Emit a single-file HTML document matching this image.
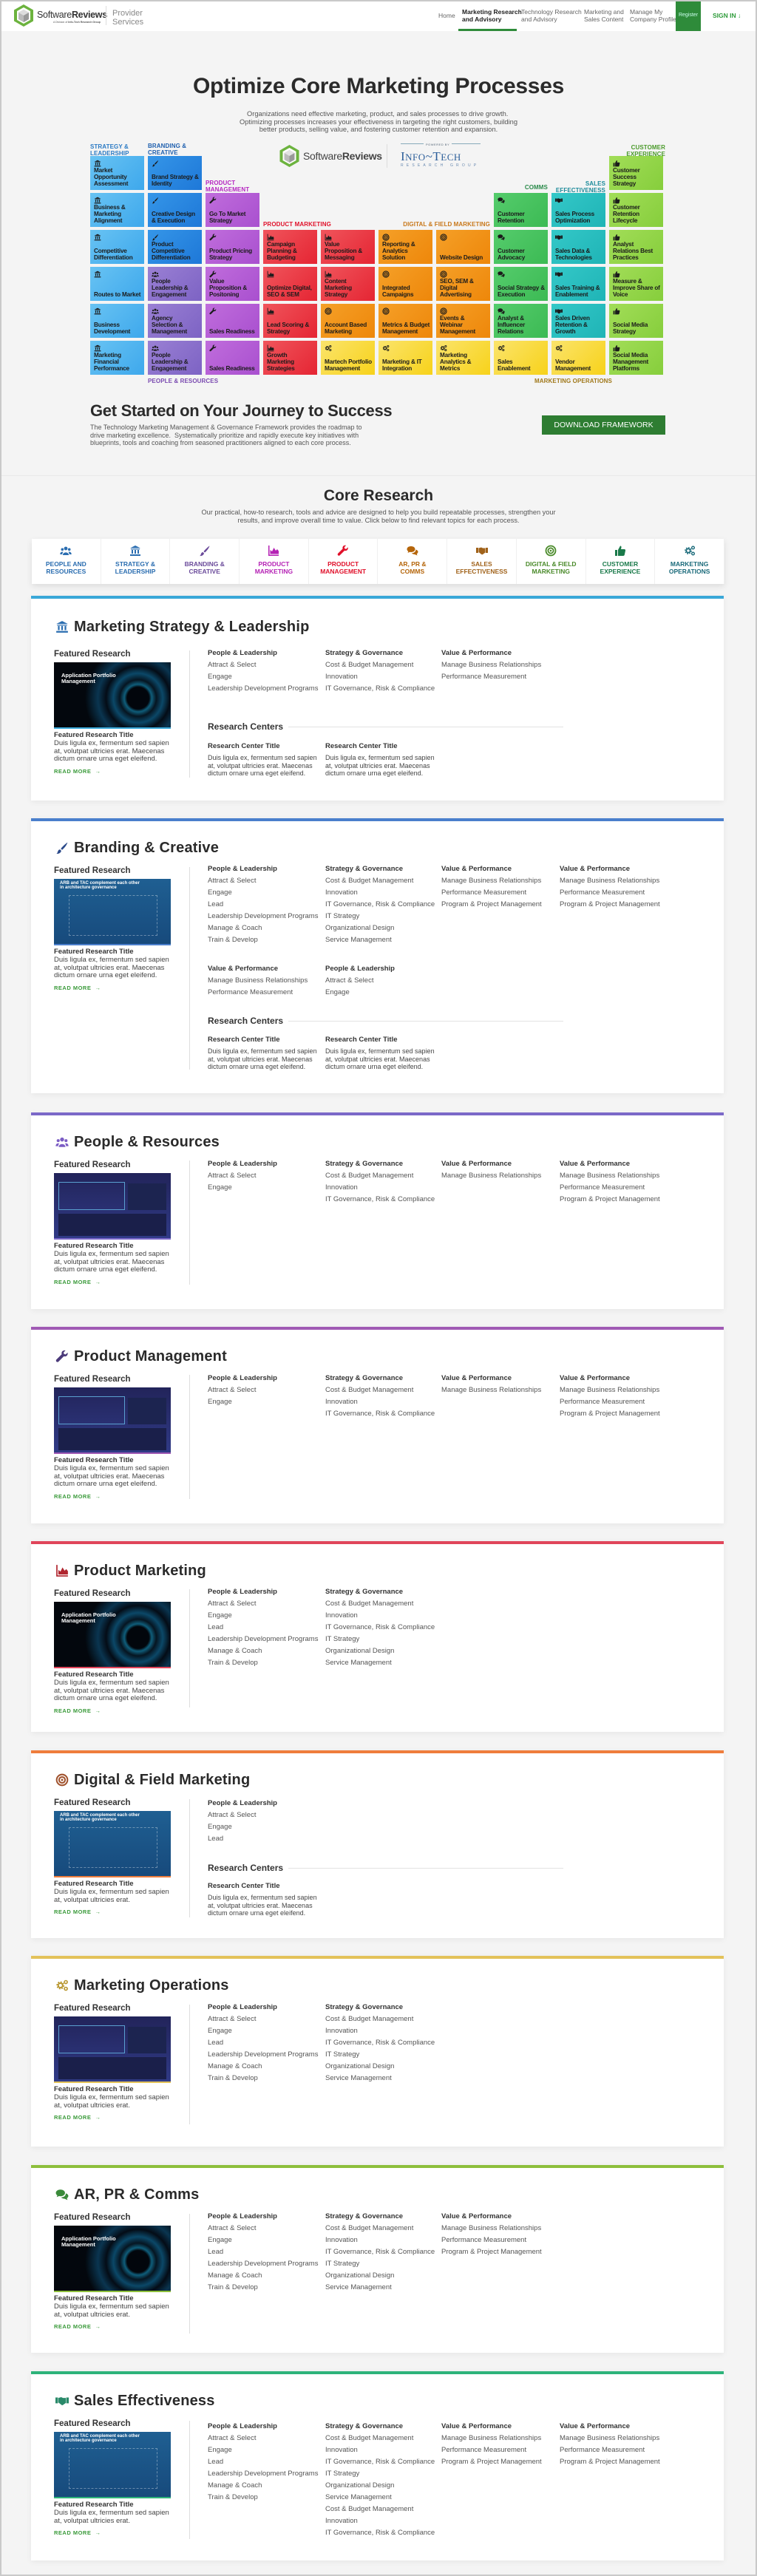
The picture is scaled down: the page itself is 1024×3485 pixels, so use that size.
<!DOCTYPE html>
<html><head><meta charset="utf-8">
<style>
*{box-sizing:border-box}
html,body{margin:0;padding:0}
body{width:1024px;height:3485px;position:relative;overflow:hidden;background:#f4f4f4;font-family:"Liberation Sans",sans-serif;color:#333}
.abs{position:absolute}
#frame{position:absolute;left:0;top:0;width:1024px;height:3485px;border:2px solid #c9c9c9;pointer-events:none;z-index:50}
header{position:absolute;left:0;top:0;width:1024px;height:42px;background:#fff}
.nav{position:absolute;font-size:8.5px;line-height:10px;color:#666;top:11px}
.t{position:absolute;width:73px;height:46px;padding:5px 3px 4px 5px;display:flex;flex-direction:column;justify-content:space-between;font-weight:bold;font-size:8.2px;line-height:9.2px;letter-spacing:-.2px;color:#1b1b1b;overflow:hidden}
.t svg{width:10px;height:10px;fill:#1b1b1b;color:#1b1b1b;flex:none}
.bl{background:linear-gradient(135deg,#68c3f3,#3ea8ec)}
.bb{background:linear-gradient(135deg,#3596e8,#1e78d8)}
.pp{background:linear-gradient(135deg,#9a80d4,#7d63c4)}
.pm{background:linear-gradient(135deg,#c06ddc,#a950cf)}
.rd{background:linear-gradient(135deg,#f0555c,#e52533)}
.or{background:linear-gradient(135deg,#f5a028,#ee870a)}
.ye{background:linear-gradient(135deg,#fbe46c,#f7d21a)}
.gr{background:linear-gradient(135deg,#55cc6c,#3cba54)}
.te{background:linear-gradient(135deg,#34c8c8,#1fb4b6)}
.li{background:linear-gradient(135deg,#a2dd58,#86ce3c)}
.lab{position:absolute;font-weight:bold;font-size:8px;line-height:8.5px;letter-spacing:.1px}
.cr{position:absolute;top:729px;height:61px;width:93.7px;background:#fff;text-align:center;font-size:8.5px;line-height:9.5px;font-weight:bold;padding-top:8px;border-right:1px solid #f0f0f0}
.cr svg{width:16px;height:16px;display:block;margin:0 auto 6px}
.sec{position:absolute;left:42px;width:937px;background:#fff;box-shadow:0 2px 8px rgba(0,0,0,.06)}
.bar{position:absolute;left:0;top:0;width:100%;height:4px}
.sh{position:absolute;left:58px;font-weight:bold;font-size:20px;line-height:22px;color:#2a2a2a;letter-spacing:.2px}
.si{position:absolute;left:31px;width:22px;height:18px}
.fr{position:absolute;left:31px;width:170px}
.fr .fl{font-weight:bold;font-size:11.5px;line-height:14px;color:#333}
.img{width:158px;height:90px;margin-top:4px;position:relative;overflow:hidden;border-bottom:2px solid}
.fr .ft{font-weight:bold;font-size:9.5px;line-height:12px;margin-top:3px;color:#333}
.fr .fd{font-size:9.5px;line-height:10.5px;color:#444;width:160px}
.fr .rm{font-size:7.5px;font-weight:bold;color:#3a9a3a;margin-top:6px;letter-spacing:.5px}
.dv{position:absolute;left:214px;width:1px;background:#ddd}
.col{position:absolute;width:155px}
.col b{display:block;height:16px;line-height:16px;font-size:9.5px;color:#333}
.col div{height:16px;line-height:16px;font-size:9.5px;color:#555;white-space:nowrap}
.rch{position:absolute;left:239px;font-weight:bold;font-size:12px;line-height:14px;color:#333}
.rcl{position:absolute;left:348px;width:372px;height:1px;background:#e2e2e2}
.rc{position:absolute;width:158px}
.rc b{display:block;font-size:9.5px;line-height:12px;color:#333;margin-bottom:4px}
.rc div{font-size:9px;line-height:10.5px;color:#444}
</style></head><body>
<svg width="0" height="0" style="position:absolute">
<defs>
<symbol id="bank" viewBox="0 0 16 16"><path d="M8 1 L15 4.5 H1 Z M2 5.5h12v1H2z M3 7h2v5H3z M7 7h2v5H7z M11 7h2v5h-2z M1 13h14v2H1z"/></symbol>
<symbol id="brush" viewBox="0 0 16 16"><path d="M14.5 1.5 C12 3 8 7 6.5 9 L8 10.5 C10 9 13.5 5 14.5 1.5Z M5.5 10 C3.5 10 3 12 2.5 13.5 C2 14.5 1.5 15 1 15 C4 15.5 6.5 14 7 11.5Z"/></symbol>
<symbol id="ppl" viewBox="0 0 16 16"><circle cx="8" cy="5" r="2.4"/><circle cx="3.3" cy="6.3" r="1.8"/><circle cx="12.7" cy="6.3" r="1.8"/><path d="M4 14 C4 9.2 12 9.2 12 14Z M0.3 13 C0.3 9.8 3 9 4.6 9.8 C3.6 10.8 3.3 12 3.3 13Z M15.7 13 C15.7 9.8 13 9 11.4 9.8 C12.4 10.8 12.7 12 12.7 13Z"/></symbol>
<symbol id="wrench" viewBox="0 0 16 16"><path d="M14.6 3.4 L12.3 5.7 L10.3 5.2 L9.8 3.2 L12.1 0.9 C10.2 0.3 8 1.3 7.5 3.3 C7.3 4.1 7.4 4.8 7.6 5.4 L1.2 11.8 C0.5 12.5 0.5 13.6 1.2 14.3 C1.9 15 3 15 3.7 14.3 L10.1 7.9 C10.7 8.1 11.5 8.2 12.2 8 C14.2 7.5 15.2 5.3 14.6 3.4Z"/></symbol>
<symbol id="chart" viewBox="0 0 16 16"><path d="M1 1h1.5v12.5H15V15H1z M3.5 12.5 V7 L6 9 L8.5 4 L11 8 L13 6 L15 8.5 V12.5Z"/></symbol>
<symbol id="target" viewBox="0 0 16 16"><circle cx="8" cy="8" r="6.5" fill="none" stroke="currentColor" stroke-width="1.8"/><circle cx="8" cy="8" r="3.6" fill="none" stroke="currentColor" stroke-width="1.8"/><circle cx="8" cy="8" r="1.3"/></symbol>
<symbol id="chat" viewBox="0 0 16 16"><path d="M6 2 C2.7 2 0.5 3.8 0.5 6 C0.5 7.2 1.2 8.3 2.3 9 L1.5 11 L4.3 9.8 C4.8 9.9 5.4 10 6 10 C9.3 10 11.5 8.2 11.5 6 C11.5 3.8 9.3 2 6 2Z M12.5 6.5 C12.5 9.5 9.7 11.3 6.8 11.3 C7.8 12.4 9.4 13 11 13 L14.5 14.5 L13.8 12.3 C14.9 11.6 15.5 10.6 15.5 9.5 C15.5 8.2 14.3 7 12.5 6.5Z"/></symbol>
<symbol id="hand" viewBox="0 0 16 16"><path d="M0 4h3v7H0z M13 4h3v7h-3z M3.5 4.5 L7 3.5 L9 4.5 L12.5 4.5 V10.5 L9 13 C8.3 13.5 7.5 13.3 7 12.7 L3.5 10Z"/></symbol>
<symbol id="thumb" viewBox="0 0 16 16"><path d="M1 7h3v8H1z M5 7 L8 1.5 C9.2 1.5 9.8 2.4 9.5 3.8 L9 6 H13.5 C14.6 6 15.3 7 15 8 L13.8 13.6 C13.6 14.4 12.9 15 12 15 H5Z"/></symbol>
<symbol id="gear" viewBox="0 0 16 16"><circle cx="6" cy="8" r="3.6" fill="none" stroke="currentColor" stroke-width="2.4" stroke-dasharray="1.6 1.2"/><circle cx="6" cy="8" r="2.6" fill="none" stroke="currentColor" stroke-width="1.6"/><circle cx="12.5" cy="4" r="1.8" fill="none" stroke="currentColor" stroke-width="1.4"/><circle cx="12.5" cy="12" r="1.8" fill="none" stroke="currentColor" stroke-width="1.4"/></symbol>
</defs></svg>

<header>
 <svg class="abs" style="left:17px;top:5px" width="30" height="32" viewBox="0 0 30 32"><polygon points="15,1 28,8.5 28,23.5 15,31 2,23.5 2,8.5" fill="#6cb33e"/><polygon points="15,5 24,10 24,22 15,27 6,22 6,10" fill="#fff"/><polygon points="15,8 22,12 22,21 15,25 8,21 8,12" fill="#bbb"/><polygon points="15,8 22,12 15,16 8,12" fill="#ddd"/><polygon points="15,16 22,12 22,21 15,25" fill="#999"/></svg>
 <div class="abs" style="left:50px;top:13px;font-size:12.5px;color:#333;letter-spacing:-.3px">Software<b>Reviews</b></div>
 <div class="abs" style="left:72px;top:28px;font-size:3.5px;color:#555">A Division of <b>Info-Tech Research Group</b></div>
 <div class="abs" style="left:143px;top:8px;width:1px;height:26px;background:#ddd"></div>
 <div class="abs" style="left:152px;top:12px;font-size:11px;line-height:12px;color:#888">Provider<br>Services</div>
 <div class="nav" style="left:593px;top:16px">Home</div>
 <div class="nav" style="left:625px;color:#222;font-weight:bold">Marketing Research<br>and Advisory</div>
 <div class="abs" style="left:620px;top:39px;width:79px;height:3px;background:#2e8b3a"></div>
 <div class="nav" style="left:705px">Technology Research<br>and Advisory</div>
 <div class="nav" style="left:790px">Marketing and<br>Sales Content</div>
 <div class="nav" style="left:852px">Manage My<br>Company Profile</div>
 <div class="abs" style="left:914px;top:0;width:34px;height:42px;background:#2e8b3a;color:#cfe;font-size:7px;text-align:center;line-height:42px">Register</div>
 <div class="abs" style="left:964px;top:16px;font-size:8.5px;font-weight:bold;color:#2e9b3a">SIGN IN ↓</div>
</header>

<div class="abs" style="left:0;top:100px;width:1024px;text-align:center;font-weight:bold;font-size:30px;color:#2b2b2b;letter-spacing:-.3px">Optimize Core Marketing Processes</div>
<div class="abs" style="left:312px;top:149px;width:400px;text-align:center;font-size:9.3px;line-height:10.7px;color:#555">Organizations need effective marketing, product, and sales processes to drive growth.&nbsp; Optimizing processes increases your effectiveness in targeting the right customers, building better products, selling value, and fostering customer retention and expansion.</div>

<!-- logos -->
<svg class="abs" style="left:376px;top:195px" width="31" height="32" viewBox="0 0 30 32"><polygon points="15,1 28,8.5 28,23.5 15,31 2,23.5 2,8.5" fill="#6cb33e"/><polygon points="15,5 24,10 24,22 15,27 6,22 6,10" fill="#fff"/><polygon points="15,8 22,12 22,21 15,25 8,21 8,12" fill="#bbb"/><polygon points="15,8 22,12 15,16 8,12" fill="#e2e2e2"/><polygon points="15,16 22,12 22,21 15,25" fill="#999"/></svg>
<div class="abs" style="left:410px;top:203px;font-size:14px;color:#444;letter-spacing:-.3px">Software<b>Reviews</b></div>
<div class="abs" style="left:523px;top:195px;width:1px;height:32px;background:#ddd"></div>
<div class="abs" style="left:542px;top:194px;width:108px;height:4px;border-top:1px solid #8ab"></div>
<div class="abs" style="left:573px;top:193px;background:#f4f4f4;padding:0 3px;font-size:4px;color:#567;letter-spacing:.5px">POWERED BY</div>
<div class="abs" style="left:542px;top:202px;font-family:'Liberation Serif',serif;font-size:17px;color:#2d5f9a;letter-spacing:.5px">I<span style="font-size:13px">NFO</span>~T<span style="font-size:13px">ECH</span></div>
<div class="abs" style="left:542px;top:221px;font-size:5px;color:#6a8ab0;letter-spacing:4.2px">RESEARCH GROUP</div>

<!-- grid labels -->
<div class="lab" style="left:122px;top:195px;color:#2a7ac4">STRATEGY &amp;<br>LEADERSHIP</div>
<div class="lab" style="left:200px;top:194px;color:#1e5fae">BRANDING &amp;<br>CREATIVE</div>
<div class="lab" style="left:278px;top:244px;color:#b525c0">PRODUCT<br>MANAGEMENT</div>
<div class="lab" style="left:356px;top:300px;color:#e0102a">PRODUCT MARKETING</div>
<div class="lab" style="left:530px;top:300px;width:133px;text-align:right;color:#c8781a">DIGITAL &amp; FIELD MARKETING</div>
<div class="lab" style="left:660px;top:250px;width:81px;text-align:right;color:#2a8a4a">COMMS</div>
<div class="lab" style="left:730px;top:245px;width:89px;text-align:right;color:#1a8a9a">SALES<br>EFFECTIVENESS</div>
<div class="lab" style="left:800px;top:196px;width:100px;text-align:right;color:#4a9a2a">CUSTOMER<br>EXPERIENCE</div>
<div class="lab" style="left:200px;top:512px;color:#7a4ab0">PEOPLE &amp; RESOURCES</div>
<div class="lab" style="left:723px;top:512px;color:#a0781a">MARKETING OPERATIONS</div>

<!-- tiles -->
<div class="t bl" style="left:122px;top:211px"><svg><use href="#bank"/></svg><span>Market Opportunity Assessment</span></div>
<div class="t bl" style="left:122px;top:261px"><svg><use href="#bank"/></svg><span>Business &amp; Marketing Alignment</span></div>
<div class="t bl" style="left:122px;top:311px"><svg><use href="#bank"/></svg><span>Competitive Differentiation</span></div>
<div class="t bl" style="left:122px;top:361px"><svg><use href="#bank"/></svg><span>Routes to Market</span></div>
<div class="t bl" style="left:122px;top:411px"><svg><use href="#bank"/></svg><span>Business Development</span></div>
<div class="t bl" style="left:122px;top:461px"><svg><use href="#bank"/></svg><span>Marketing Financial Performance</span></div>

<div class="t bb" style="left:200px;top:211px"><svg><use href="#brush"/></svg><span>Brand Strategy &amp; Identity</span></div>
<div class="t bb" style="left:200px;top:261px"><svg><use href="#brush"/></svg><span>Creative Design &amp; Execution</span></div>
<div class="t bb" style="left:200px;top:311px"><svg><use href="#brush"/></svg><span>Product Competitive Differentiation</span></div>
<div class="t pp" style="left:200px;top:361px"><svg><use href="#ppl"/></svg><span>People Leadership &amp; Engagement</span></div>
<div class="t pp" style="left:200px;top:411px"><svg><use href="#ppl"/></svg><span>Agency Selection &amp; Management</span></div>
<div class="t pp" style="left:200px;top:461px"><svg><use href="#ppl"/></svg><span>People Leadership &amp; Engagement</span></div>

<div class="t pm" style="left:278px;top:261px"><svg><use href="#wrench"/></svg><span>Go To Market Strategy</span></div>
<div class="t pm" style="left:278px;top:311px"><svg><use href="#wrench"/></svg><span>Product Pricing Strategy</span></div>
<div class="t pm" style="left:278px;top:361px"><svg><use href="#wrench"/></svg><span>Value Proposition &amp; Positoning</span></div>
<div class="t pm" style="left:278px;top:411px"><svg><use href="#wrench"/></svg><span>Sales Readiness</span></div>
<div class="t pm" style="left:278px;top:461px"><svg><use href="#wrench"/></svg><span>Sales Readiness</span></div>

<div class="t rd" style="left:356px;top:311px"><svg><use href="#chart"/></svg><span>Campaign Planning &amp; Budgeting</span></div>
<div class="t rd" style="left:356px;top:361px"><svg><use href="#chart"/></svg><span>Optimize Digital, SEO &amp; SEM</span></div>
<div class="t rd" style="left:356px;top:411px"><svg><use href="#chart"/></svg><span>Lead Scoring &amp; Strategy</span></div>
<div class="t rd" style="left:356px;top:461px"><svg><use href="#chart"/></svg><span>Growth Marketing Strategies</span></div>

<div class="t rd" style="left:434px;top:311px"><svg><use href="#chart"/></svg><span>Value Proposition &amp; Messaging</span></div>
<div class="t rd" style="left:434px;top:361px"><svg><use href="#chart"/></svg><span>Content Marketing Strategy</span></div>
<div class="t or" style="left:434px;top:411px"><svg><use href="#target"/></svg><span>Account Based Marketing</span></div>
<div class="t ye" style="left:434px;top:461px"><svg><use href="#gear"/></svg><span>Martech Portfolio Management</span></div>

<div class="t or" style="left:512px;top:311px"><svg><use href="#target"/></svg><span>Reporting &amp; Analytics Solution</span></div>
<div class="t or" style="left:512px;top:361px"><svg><use href="#target"/></svg><span>Integrated Campaigns</span></div>
<div class="t or" style="left:512px;top:411px"><svg><use href="#target"/></svg><span>Metrics &amp; Budget Management</span></div>
<div class="t ye" style="left:512px;top:461px"><svg><use href="#gear"/></svg><span>Marketing &amp; IT Integration</span></div>

<div class="t or" style="left:590px;top:311px"><svg><use href="#target"/></svg><span>Website Design</span></div>
<div class="t or" style="left:590px;top:361px"><svg><use href="#target"/></svg><span>SEO, SEM &amp; Digital Advertising</span></div>
<div class="t or" style="left:590px;top:411px"><svg><use href="#target"/></svg><span>Events &amp; Webinar Management</span></div>
<div class="t ye" style="left:590px;top:461px"><svg><use href="#gear"/></svg><span>Marketing Analytics &amp; Metrics</span></div>

<div class="t gr" style="left:668px;top:261px"><svg><use href="#chat"/></svg><span>Customer Retention</span></div>
<div class="t gr" style="left:668px;top:311px"><svg><use href="#chat"/></svg><span>Customer Advocacy</span></div>
<div class="t gr" style="left:668px;top:361px"><svg><use href="#chat"/></svg><span>Social Strategy &amp; Execution</span></div>
<div class="t gr" style="left:668px;top:411px"><svg><use href="#chat"/></svg><span>Analyst &amp; Influencer Relations</span></div>
<div class="t ye" style="left:668px;top:461px"><svg><use href="#gear"/></svg><span>Sales Enablement</span></div>

<div class="t te" style="left:746px;top:261px"><svg><use href="#hand"/></svg><span>Sales Process Optimization</span></div>
<div class="t te" style="left:746px;top:311px"><svg><use href="#hand"/></svg><span>Sales Data &amp; Technologies</span></div>
<div class="t te" style="left:746px;top:361px"><svg><use href="#hand"/></svg><span>Sales Training &amp; Enablement</span></div>
<div class="t te" style="left:746px;top:411px"><svg><use href="#hand"/></svg><span>Sales Driven Retention &amp; Growth</span></div>
<div class="t ye" style="left:746px;top:461px"><svg><use href="#gear"/></svg><span>Vendor Management</span></div>

<div class="t li" style="left:824px;top:211px"><svg><use href="#thumb"/></svg><span>Customer Success Strategy</span></div>
<div class="t li" style="left:824px;top:261px"><svg><use href="#thumb"/></svg><span>Customer Retention Lifecycle</span></div>
<div class="t li" style="left:824px;top:311px"><svg><use href="#thumb"/></svg><span>Analyst Relations Best Practices</span></div>
<div class="t li" style="left:824px;top:361px"><svg><use href="#thumb"/></svg><span>Measure &amp; Improve Share of Voice</span></div>
<div class="t li" style="left:824px;top:411px"><svg><use href="#thumb"/></svg><span>Social Media Strategy</span></div>
<div class="t li" style="left:824px;top:461px"><svg><use href="#thumb"/></svg><span>Social Media Management Platforms</span></div>

<!-- get started -->
<div class="abs" style="left:122px;top:543px;font-weight:bold;font-size:22px;color:#2b2b2b;letter-spacing:-.3px">Get Started on Your Journey to Success</div>
<div class="abs" style="left:122px;top:573px;width:375px;font-size:9px;line-height:10.7px;color:#555">The Technology Marketing Management &amp; Governance Framework provides the roadmap to drive marketing excellence.&nbsp; Systematically prioritize and rapidly execute key initiatives with blueprints, tools and coaching from seasoned practitioners aligned to each core process.</div>
<div class="abs" style="left:733px;top:562px;width:167px;height:26px;background:#2e7d32;color:#fff;font-size:10.5px;line-height:26px;text-align:center">DOWNLOAD FRAMEWORK</div>
<div class="abs" style="left:0;top:643px;width:1024px;height:1px;background:#e8e8e8"></div>

<!-- core research -->
<div class="abs" style="left:0;top:659px;width:1024px;text-align:center;font-weight:bold;font-size:21px;color:#2b2b2b">Core Research</div>
<div class="abs" style="left:272px;top:688px;width:480px;text-align:center;font-size:9.2px;line-height:11px;color:#555">Our practical, how-to research, tools and advice are designed to help you build repeatable processes, strengthen your results, and improve overall time to value. Click below to find relevant topics for each process.</div>
<div class="abs" style="left:43px;top:729px;width:937px;height:61px;box-shadow:0 3px 8px rgba(0,0,0,.1);background:#fff"></div>
<div class="cr" style="left:43px;color:#2a6db0"><svg style="fill:#2a6db0"><use href="#ppl"/></svg>PEOPLE AND<br>RESOURCES</div>
<div class="cr" style="left:136.7px;color:#2a6db0"><svg style="fill:#2a6db0"><use href="#bank"/></svg>STRATEGY &amp;<br>LEADERSHIP</div>
<div class="cr" style="left:230.4px;color:#6a4a9a"><svg style="fill:#6a4a9a"><use href="#brush"/></svg>BRANDING &amp;<br>CREATIVE</div>
<div class="cr" style="left:324.1px;color:#b523b5"><svg style="fill:#b523b5"><use href="#chart"/></svg>PRODUCT<br>MARKETING</div>
<div class="cr" style="left:417.8px;color:#e0102a"><svg style="fill:#e0102a"><use href="#wrench"/></svg>PRODUCT<br>MANAGEMENT</div>
<div class="cr" style="left:511.5px;color:#b5650a"><svg style="fill:#b5650a"><use href="#chat"/></svg>AR, PR &amp;<br>COMMS</div>
<div class="cr" style="left:605.2px;color:#a0621a"><svg style="fill:#a0621a"><use href="#hand"/></svg>SALES<br>EFFECTIVENESS</div>
<div class="cr" style="left:698.9px;color:#4a8a2a"><svg style="fill:#4a8a2a;color:#4a8a2a"><use href="#target"/></svg>DIGITAL &amp; FIELD<br>MARKETING</div>
<div class="cr" style="left:792.6px;color:#1a7a4a"><svg style="fill:#1a7a4a"><use href="#thumb"/></svg>CUSTOMER<br>EXPERIENCE</div>
<div class="cr" style="left:886.3px;color:#1a6a7a"><svg style="fill:#1a6a7a;color:#1a6a7a"><use href="#gear"/></svg>MARKETING<br>OPERATIONS</div>

<!-- SECTION 1 -->
<div class="sec" style="top:806px;height:277px">
 <div class="bar" style="background:#3aa8d8"></div>
 <svg class="si" style="top:33px;fill:#2a6db0"><use href="#bank"/></svg>
 <div class="sh" style="top:31px">Marketing Strategy &amp; Leadership</div>
 <div class="fr" style="top:72px"><div class="fl">Featured Research</div>
  <div class="img" style="border-color:#3aa8d8;background:radial-gradient(circle at 72% 55%,#02060c 0 12%,#0f5d7a 15%,#061521 20%,#0b4868 27%,#040c16 35%,#0a3550 44%,#03070d 58%)"><div style="position:absolute;left:10px;top:14px;color:#fff;font-weight:bold;font-size:7.5px;line-height:7.5px">Application Portfolio<br>Management</div></div>
  <div class="ft">Featured Research Title</div><div class="fd">Duis ligula ex, fermentum sed sapien at, volutpat ultricies erat. Maecenas dictum ornare urna eget eleifend.</div><div class="rm">READ MORE &nbsp;→</div></div>
 <div class="dv" style="top:74px;height:172px"></div>
 <div class="col" style="left:239px;top:70px"><b>People &amp; Leadership</b><div>Attract &amp; Select</div><div>Engage</div><div>Leadership Development Programs</div></div>
 <div class="col" style="left:398px;top:70px"><b>Strategy &amp; Governance</b><div>Cost &amp; Budget Management</div><div>Innovation</div><div>IT Governance, Risk &amp; Compliance</div></div>
 <div class="col" style="left:555px;top:70px"><b>Value &amp; Performance</b><div>Manage Business Relationships</div><div>Performance Measurement</div></div>
 <div class="rch" style="top:170px">Research Centers</div><div class="rcl" style="top:177px"></div>
 <div class="rc" style="left:239px;top:198px"><b>Research Center Title</b><div>Duis ligula ex, fermentum sed sapien at, volutpat ultricies erat. Maecenas dictum ornare urna eget eleifend.</div></div>
 <div class="rc" style="left:398px;top:198px"><b>Research Center Title</b><div>Duis ligula ex, fermentum sed sapien at, volutpat ultricies erat. Maecenas dictum ornare urna eget eleifend.</div></div>
</div>

<!-- SECTION 2 -->
<div class="sec" style="top:1107px;height:372px">
 <div class="bar" style="background:#4a7fcc"></div>
 <svg class="si" style="top:31px;fill:#2b4a8a"><use href="#brush"/></svg>
 <div class="sh" style="top:29px">Branding &amp; Creative</div>
 <div class="fr" style="top:64px"><div class="fl">Featured Research</div>
  <div class="img" style="border-color:#4a7fcc;background:linear-gradient(180deg,#1f5f92,#174a7c)"><div style="position:absolute;left:8px;top:3px;color:#fff;font-weight:bold;font-size:6px;line-height:6px">ARB and TAC complement each other<br>in architecture governance</div><div style="position:absolute;left:20px;top:22px;width:120px;height:55px;border:1px dashed rgba(255,255,255,.35)"></div></div>
  <div class="ft">Featured Research Title</div><div class="fd">Duis ligula ex, fermentum sed sapien at, volutpat ultricies erat. Maecenas dictum ornare urna eget eleifend.</div><div class="rm">READ MORE &nbsp;→</div></div>
 <div class="dv" style="top:66px;height:274px"></div>
 <div class="col" style="left:239px;top:61px"><b>People &amp; Leadership</b><div>Attract &amp; Select</div><div>Engage</div><div>Lead</div><div>Leadership Development Programs</div><div>Manage &amp; Coach</div><div>Train &amp; Develop</div></div>
 <div class="col" style="left:398px;top:61px"><b>Strategy &amp; Governance</b><div>Cost &amp; Budget Management</div><div>Innovation</div><div>IT Governance, Risk &amp; Compliance</div><div>IT Strategy</div><div>Organizational Design</div><div>Service Management</div></div>
 <div class="col" style="left:555px;top:61px"><b>Value &amp; Performance</b><div>Manage Business Relationships</div><div>Performance Measurement</div><div>Program &amp; Project Management</div></div>
 <div class="col" style="left:715px;top:61px"><b>Value &amp; Performance</b><div>Manage Business Relationships</div><div>Performance Measurement</div><div>Program &amp; Project Management</div></div>
 <div class="col" style="left:239px;top:196px"><b>Value &amp; Performance</b><div>Manage Business Relationships</div><div>Performance Measurement</div></div>
 <div class="col" style="left:398px;top:196px"><b>People &amp; Leadership</b><div>Attract &amp; Select</div><div>Engage</div></div>
 <div class="rch" style="top:267px">Research Centers</div><div class="rcl" style="top:274px"></div>
 <div class="rc" style="left:239px;top:294px"><b>Research Center Title</b><div>Duis ligula ex, fermentum sed sapien at, volutpat ultricies erat. Maecenas dictum ornare urna eget eleifend.</div></div>
 <div class="rc" style="left:398px;top:294px"><b>Research Center Title</b><div>Duis ligula ex, fermentum sed sapien at, volutpat ultricies erat. Maecenas dictum ornare urna eget eleifend.</div></div>
</div>

<!-- SECTION 3 -->
<div class="sec" style="top:1505px;height:266px">
 <div class="bar" style="background:#7b68c8"></div>
 <svg class="si" style="top:31px;fill:#7b5cc4"><use href="#ppl"/></svg>
 <div class="sh" style="top:29px">People &amp; Resources</div>
 <div class="fr" style="top:64px"><div class="fl">Featured Research</div>
  <div class="img" style="border-color:#7b68c8;background:linear-gradient(180deg,#22245a,#303a86)"><div style="position:absolute;left:6px;top:12px;width:90px;height:38px;border:1px solid #5aa0d0"></div><div style="position:absolute;left:100px;top:14px;width:52px;height:36px;background:#1c2450"></div><div style="position:absolute;left:6px;top:55px;width:146px;height:30px;background:#1a1f4a"></div></div>
  <div class="ft">Featured Research Title</div><div class="fd">Duis ligula ex, fermentum sed sapien at, volutpat ultricies erat. Maecenas dictum ornare urna eget eleifend.</div><div class="rm">READ MORE &nbsp;→</div></div>
 <div class="dv" style="top:65px;height:168px"></div>
 <div class="col" style="left:239px;top:62px"><b>People &amp; Leadership</b><div>Attract &amp; Select</div><div>Engage</div></div>
 <div class="col" style="left:398px;top:62px"><b>Strategy &amp; Governance</b><div>Cost &amp; Budget Management</div><div>Innovation</div><div>IT Governance, Risk &amp; Compliance</div></div>
 <div class="col" style="left:555px;top:62px"><b>Value &amp; Performance</b><div>Manage Business Relationships</div></div>
 <div class="col" style="left:715px;top:62px"><b>Value &amp; Performance</b><div>Manage Business Relationships</div><div>Performance Measurement</div><div>Program &amp; Project Management</div></div>
</div>

<!-- SECTION 4 -->
<div class="sec" style="top:1795px;height:266px">
 <div class="bar" style="background:#a05ab4"></div>
 <svg class="si" style="top:31px;fill:#4b3a7a"><use href="#wrench"/></svg>
 <div class="sh" style="top:29px">Product Management</div>
 <div class="fr" style="top:64px"><div class="fl">Featured Research</div>
  <div class="img" style="border-color:#a05ab4;background:linear-gradient(180deg,#22245a,#303a86)"><div style="position:absolute;left:6px;top:12px;width:90px;height:38px;border:1px solid #5aa0d0"></div><div style="position:absolute;left:100px;top:14px;width:52px;height:36px;background:#1c2450"></div><div style="position:absolute;left:6px;top:55px;width:146px;height:30px;background:#1a1f4a"></div></div>
  <div class="ft">Featured Research Title</div><div class="fd">Duis ligula ex, fermentum sed sapien at, volutpat ultricies erat. Maecenas dictum ornare urna eget eleifend.</div><div class="rm">READ MORE &nbsp;→</div></div>
 <div class="dv" style="top:65px;height:168px"></div>
 <div class="col" style="left:239px;top:62px"><b>People &amp; Leadership</b><div>Attract &amp; Select</div><div>Engage</div></div>
 <div class="col" style="left:398px;top:62px"><b>Strategy &amp; Governance</b><div>Cost &amp; Budget Management</div><div>Innovation</div><div>IT Governance, Risk &amp; Compliance</div></div>
 <div class="col" style="left:555px;top:62px"><b>Value &amp; Performance</b><div>Manage Business Relationships</div></div>
 <div class="col" style="left:715px;top:62px"><b>Value &amp; Performance</b><div>Manage Business Relationships</div><div>Performance Measurement</div><div>Program &amp; Project Management</div></div>
</div>

<!-- SECTION 5 -->
<div class="sec" style="top:2085px;height:258px">
 <div class="bar" style="background:#e0455a"></div>
 <svg class="si" style="top:31px;fill:#b0252f"><use href="#chart"/></svg>
 <div class="sh" style="top:29px">Product Marketing</div>
 <div class="fr" style="top:64px"><div class="fl">Featured Research</div>
  <div class="img" style="border-color:#e0455a;background:radial-gradient(circle at 72% 55%,#02060c 0 12%,#0f5d7a 15%,#061521 20%,#0b4868 27%,#040c16 35%,#0a3550 44%,#03070d 58%)"><div style="position:absolute;left:10px;top:14px;color:#fff;font-weight:bold;font-size:7.5px;line-height:7.5px">Application Portfolio<br>Management</div></div>
  <div class="ft">Featured Research Title</div><div class="fd">Duis ligula ex, fermentum sed sapien at, volutpat ultricies erat. Maecenas dictum ornare urna eget eleifend.</div><div class="rm">READ MORE &nbsp;→</div></div>
 <div class="dv" style="top:65px;height:160px"></div>
 <div class="col" style="left:239px;top:61px"><b>People &amp; Leadership</b><div>Attract &amp; Select</div><div>Engage</div><div>Lead</div><div>Leadership Development Programs</div><div>Manage &amp; Coach</div><div>Train &amp; Develop</div></div>
 <div class="col" style="left:398px;top:61px"><b>Strategy &amp; Governance</b><div>Cost &amp; Budget Management</div><div>Innovation</div><div>IT Governance, Risk &amp; Compliance</div><div>IT Strategy</div><div>Organizational Design</div><div>Service Management</div></div>
</div>

<!-- SECTION 6 -->
<div class="sec" style="top:2368px;height:254px">
 <div class="bar" style="background:#ef7d3c"></div>
 <svg class="si" style="top:31px;fill:#a0522d;color:#a0522d"><use href="#target"/></svg>
 <div class="sh" style="top:29px">Digital &amp; Field Marketing</div>
 <div class="fr" style="top:64px"><div class="fl">Featured Research</div>
  <div class="img" style="border-color:#ef7d3c;background:linear-gradient(180deg,#1f5f92,#174a7c)"><div style="position:absolute;left:8px;top:3px;color:#fff;font-weight:bold;font-size:6px;line-height:6px">ARB and TAC complement each other<br>in architecture governance</div><div style="position:absolute;left:20px;top:22px;width:120px;height:55px;border:1px dashed rgba(255,255,255,.35)"></div></div>
  <div class="ft">Featured Research Title</div><div class="fd">Duis ligula ex, fermentum sed sapien at, volutpat ultricies erat.</div><div class="rm">READ MORE &nbsp;→</div></div>
 <div class="dv" style="top:66px;height:160px"></div>
 <div class="col" style="left:239px;top:64px"><b>People &amp; Leadership</b><div>Attract &amp; Select</div><div>Engage</div><div>Lead</div></div>
 <div class="rch" style="top:152px">Research Centers</div><div class="rcl" style="top:159px"></div>
 <div class="rc" style="left:239px;top:178px"><b>Research Center Title</b><div>Duis ligula ex, fermentum sed sapien at, volutpat ultricies erat. Maecenas dictum ornare urna eget eleifend.</div></div>
</div>

<!-- SECTION 7 -->
<div class="sec" style="top:2646px;height:258px">
 <div class="bar" style="background:#e3c25a"></div>
 <svg class="si" style="top:31px;fill:#b8962e;color:#b8962e"><use href="#gear"/></svg>
 <div class="sh" style="top:29px">Marketing Operations</div>
 <div class="fr" style="top:64px"><div class="fl">Featured Research</div>
  <div class="img" style="border-color:#e3c25a;background:linear-gradient(180deg,#22245a,#303a86)"><div style="position:absolute;left:6px;top:12px;width:90px;height:38px;border:1px solid #5aa0d0"></div><div style="position:absolute;left:100px;top:14px;width:52px;height:36px;background:#1c2450"></div><div style="position:absolute;left:6px;top:55px;width:146px;height:30px;background:#1a1f4a"></div></div>
  <div class="ft">Featured Research Title</div><div class="fd">Duis ligula ex, fermentum sed sapien at, volutpat ultricies erat.</div><div class="rm">READ MORE &nbsp;→</div></div>
 <div class="dv" style="top:66px;height:162px"></div>
 <div class="col" style="left:239px;top:62px"><b>People &amp; Leadership</b><div>Attract &amp; Select</div><div>Engage</div><div>Lead</div><div>Leadership Development Programs</div><div>Manage &amp; Coach</div><div>Train &amp; Develop</div></div>
 <div class="col" style="left:398px;top:62px"><b>Strategy &amp; Governance</b><div>Cost &amp; Budget Management</div><div>Innovation</div><div>IT Governance, Risk &amp; Compliance</div><div>IT Strategy</div><div>Organizational Design</div><div>Service Management</div></div>
</div>

<!-- SECTION 8 -->
<div class="sec" style="top:2929px;height:254px">
 <div class="bar" style="background:#8dbf3c"></div>
 <svg class="si" style="top:31px;fill:#3a8a3a"><use href="#chat"/></svg>
 <div class="sh" style="top:29px">AR, PR &amp; Comms</div>
 <div class="fr" style="top:64px"><div class="fl">Featured Research</div>
  <div class="img" style="border-color:#8dbf3c;background:radial-gradient(circle at 72% 55%,#02060c 0 12%,#0f5d7a 15%,#061521 20%,#0b4868 27%,#040c16 35%,#0a3550 44%,#03070d 58%)"><div style="position:absolute;left:10px;top:14px;color:#fff;font-weight:bold;font-size:7.5px;line-height:7.5px">Application Portfolio<br>Management</div></div>
  <div class="ft">Featured Research Title</div><div class="fd">Duis ligula ex, fermentum sed sapien at, volutpat ultricies erat.</div><div class="rm">READ MORE &nbsp;→</div></div>
 <div class="dv" style="top:66px;height:162px"></div>
 <div class="col" style="left:239px;top:62px"><b>People &amp; Leadership</b><div>Attract &amp; Select</div><div>Engage</div><div>Lead</div><div>Leadership Development Programs</div><div>Manage &amp; Coach</div><div>Train &amp; Develop</div></div>
 <div class="col" style="left:398px;top:62px"><b>Strategy &amp; Governance</b><div>Cost &amp; Budget Management</div><div>Innovation</div><div>IT Governance, Risk &amp; Compliance</div><div>IT Strategy</div><div>Organizational Design</div><div>Service Management</div></div>
 <div class="col" style="left:555px;top:62px"><b>Value &amp; Performance</b><div>Manage Business Relationships</div><div>Performance Measurement</div><div>Program &amp; Project Management</div></div>
</div>

<!-- SECTION 9 -->
<div class="sec" style="top:3208px;height:256px">
 <div class="bar" style="background:#2db37a"></div>
 <svg class="si" style="top:31px;fill:#2a8a6a"><use href="#hand"/></svg>
 <div class="sh" style="top:29px">Sales Effectiveness</div>
 <div class="fr" style="top:64px"><div class="fl">Featured Research</div>
  <div class="img" style="border-color:#2db37a;background:linear-gradient(180deg,#1f5f92,#174a7c)"><div style="position:absolute;left:8px;top:3px;color:#fff;font-weight:bold;font-size:6px;line-height:6px">ARB and TAC complement each other<br>in architecture governance</div><div style="position:absolute;left:20px;top:22px;width:120px;height:55px;border:1px dashed rgba(255,255,255,.35)"></div></div>
  <div class="ft">Featured Research Title</div><div class="fd">Duis ligula ex, fermentum sed sapien at, volutpat ultricies erat.</div><div class="rm">READ MORE &nbsp;→</div></div>
 <div class="dv" style="top:67px;height:160px"></div>
 <div class="col" style="left:239px;top:67px"><b>People &amp; Leadership</b><div>Attract &amp; Select</div><div>Engage</div><div>Lead</div><div>Leadership Development Programs</div><div>Manage &amp; Coach</div><div>Train &amp; Develop</div></div>
 <div class="col" style="left:398px;top:67px"><b>Strategy &amp; Governance</b><div>Cost &amp; Budget Management</div><div>Innovation</div><div>IT Governance, Risk &amp; Compliance</div><div>IT Strategy</div><div>Organizational Design</div><div>Service Management</div><div>Cost &amp; Budget Management</div><div>Innovation</div><div>IT Governance, Risk &amp; Compliance</div></div>
 <div class="col" style="left:555px;top:67px"><b>Value &amp; Performance</b><div>Manage Business Relationships</div><div>Performance Measurement</div><div>Program &amp; Project Management</div></div>
 <div class="col" style="left:715px;top:67px"><b>Value &amp; Performance</b><div>Manage Business Relationships</div><div>Performance Measurement</div><div>Program &amp; Project Management</div></div>
</div>

<div id="frame"></div>
</body></html>
